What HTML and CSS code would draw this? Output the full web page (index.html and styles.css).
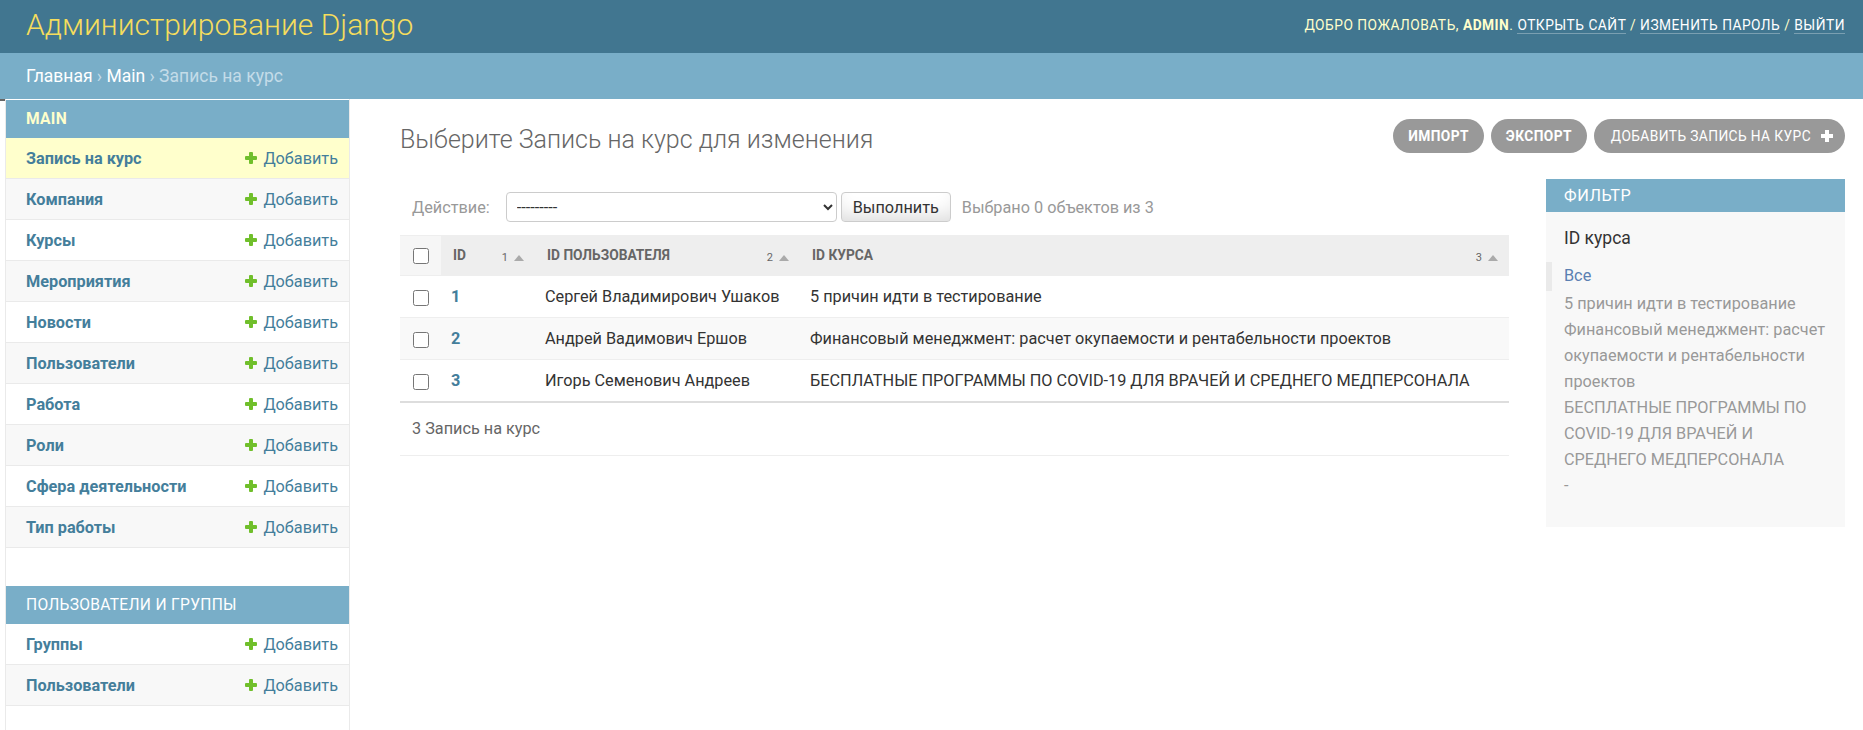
FILE: index.html
```html
<!DOCTYPE html>
<html lang="ru">
<head>
<meta charset="utf-8">
<title>Выберите Запись на курс для изменения | Администрирование Django</title>
<link rel="stylesheet" href="styles.css">
</head>
<body>
<div class="header">
  <div class="branding">Администрирование Django</div>
  <div class="user-tools">Добро пожаловать, <strong>admin</strong>. <a href="#">Открыть сайт</a> / <a href="#">Изменить пароль</a> / <a href="#">Выйти</a></div>
</div>
<div class="breadcrumbs"><a href="#">Главная</a>&nbsp;›&nbsp;<a href="#">Main</a>&nbsp;›&nbsp;Запись на курс</div>
<div class="main">
  <div class="toggle"><span class="toggle-mark"></span></div>
  <nav class="sidebar">
    <div class="module">
      <div class="caption current">Main</div>
      <div class="row selected"><a class="model" href="#">Запись на курс</a><a class="addlink" href="#"><span class="plus"></span>Добавить</a></div>
      <div class="row alt"><a class="model" href="#">Компания</a><a class="addlink" href="#"><span class="plus"></span>Добавить</a></div>
      <div class="row"><a class="model" href="#">Курсы</a><a class="addlink" href="#"><span class="plus"></span>Добавить</a></div>
      <div class="row alt"><a class="model" href="#">Мероприятия</a><a class="addlink" href="#"><span class="plus"></span>Добавить</a></div>
      <div class="row"><a class="model" href="#">Новости</a><a class="addlink" href="#"><span class="plus"></span>Добавить</a></div>
      <div class="row alt"><a class="model" href="#">Пользователи</a><a class="addlink" href="#"><span class="plus"></span>Добавить</a></div>
      <div class="row"><a class="model" href="#">Работа</a><a class="addlink" href="#"><span class="plus"></span>Добавить</a></div>
      <div class="row alt"><a class="model" href="#">Роли</a><a class="addlink" href="#"><span class="plus"></span>Добавить</a></div>
      <div class="row"><a class="model" href="#">Сфера деятельности</a><a class="addlink" href="#"><span class="plus"></span>Добавить</a></div>
      <div class="row alt"><a class="model" href="#">Тип работы</a><a class="addlink" href="#"><span class="plus"></span>Добавить</a></div>
    </div>
    <div class="module">
      <div class="caption">Пользователи и группы</div>
      <div class="row"><a class="model" href="#">Группы</a><a class="addlink" href="#"><span class="plus"></span>Добавить</a></div>
      <div class="row alt"><a class="model" href="#">Пользователи</a><a class="addlink" href="#"><span class="plus"></span>Добавить</a></div>
    </div>
  </nav>
  <div class="content">
    <div class="title-row">
      <h1>Выберите Запись на курс для изменения</h1>
      <ul class="object-tools">
        <li><a class="tool strong" href="#">Импорт</a></li>
        <li><a class="tool strong" href="#">Экспорт</a></li>
        <li><a class="tool add" href="#">Добавить Запись на курс<span class="tool-plus"></span></a></li>
      </ul>
    </div>
    <div class="changelist">
      <div class="form-container">
        <div class="actions">
          <label class="action-label">Действие:</label>
          <select class="action-select"><option>---------</option></select>
          <button class="button" type="button">Выполнить</button>
          <span class="action-counter">Выбрано 0 объектов из 3</span>
        </div>
        <table class="results">
          <colgroup><col class="c1"><col class="c2"><col class="c3"><col class="c4"></colgroup>
          <thead>
            <tr>
              <th class="cb-col"><input type="checkbox" class="cb"></th>
              <th class="sorted"><div class="sortoptions"><span class="prio">1</span><span class="arrow"></span></div><div class="text">ID</div></th>
              <th class="sorted"><div class="sortoptions"><span class="prio">2</span><span class="arrow"></span></div><div class="text">ID пользователя</div></th>
              <th class="sorted"><div class="sortoptions"><span class="prio">3</span><span class="arrow"></span></div><div class="text">ID курса</div></th>
            </tr>
          </thead>
          <tbody>
            <tr>
              <td class="cb-cell"><input type="checkbox" class="cb"></td>
              <td><a class="idlink" href="#">1</a></td>
              <td>Сергей Владимирович Ушаков</td>
              <td>5 причин идти в тестирование</td>
            </tr>
            <tr class="alt">
              <td class="cb-cell"><input type="checkbox" class="cb"></td>
              <td><a class="idlink" href="#">2</a></td>
              <td>Андрей Вадимович Ершов</td>
              <td>Финансовый менеджмент: расчет окупаемости и рентабельности проектов</td>
            </tr>
            <tr>
              <td class="cb-cell"><input type="checkbox" class="cb"></td>
              <td><a class="idlink" href="#">3</a></td>
              <td>Игорь Семенович Андреев</td>
              <td>БЕСПЛАТНЫЕ ПРОГРАММЫ ПО COVID-19 ДЛЯ ВРАЧЕЙ И СРЕДНЕГО МЕДПЕРСОНАЛА</td>
            </tr>
          </tbody>
        </table>
        <p class="paginator">3 Запись на курс</p>
      </div>
      <div class="filter">
        <h2 class="filter-title">Фильтр</h2>
        <h3 class="filter-h3">ID курса</h3>
        <ul class="filter-list">
          <li class="chosen"><a href="#">Все</a></li>
          <li><a href="#">5 причин идти в тестирование</a></li>
          <li><a href="#">Финансовый менеджмент: расчет<br>окупаемости и рентабельности<br>проектов</a></li>
          <li><a href="#">БЕСПЛАТНЫЕ ПРОГРАММЫ ПО<br>COVID-19 ДЛЯ ВРАЧЕЙ И<br>СРЕДНЕГО МЕДПЕРСОНАЛА</a></li>
          <li><a href="#">-</a></li>
        </ul>
      </div>
    </div>
  </div>
</div>
</body>
</html>
```

FILE: styles.css
```css
* { box-sizing: border-box; }

body {
  margin: 0;
  background: #fff;
  color: #333;
  font-family: Roboto, "Liberation Sans", sans-serif;
  font-size: 16.25px;
}

a { text-decoration: none; }

/* header */
.header {
  height: 53px;
  background: #417690;
  display: flex;
  align-items: center;
  justify-content: space-between;
  padding: 0 18px 4px 26px;
}
.branding {
  font-size: 30px;
  font-weight: 300;
  color: #f5dd5d;
  line-height: 1;
}
.user-tools {
  font-size: 13.75px;
  letter-spacing: 0.5px;
  text-transform: uppercase;
  color: #ffc;
  line-height: 18px;
}
.user-tools strong { font-weight: 700; }
.user-tools a {
  color: #fff;
  border-bottom: 1px solid rgba(255, 255, 255, 0.3);
}

/* breadcrumbs */
.breadcrumbs {
  height: 46px;
  background: #79aec8;
  padding: 0 26px;
  display: flex;
  align-items: center;
  font-size: 17.5px;
  color: #c4dce8;
}
.breadcrumbs a { color: #fff; }

/* main */
.main {
  display: flex;
  align-items: stretch;
  min-height: 631px;
}
.toggle {
  flex: 0 0 6px;
  border-right: 1px solid #eaeaea;
  position: relative;
}
.toggle-mark {
  position: absolute;
  left: 0;
  top: 0;
  width: 5px;
  height: 2px;
  background: #666;
}

/* sidebar */
.sidebar {
  flex: 0 0 344px;
  border-right: 1px solid #eaeaea;
  padding-top: 1px;
  font-size: 16.25px;
}
.module { margin-bottom: 38px; }
.caption {
  background: #79aec8;
  color: #fff;
  padding: 9px 20px;
  line-height: 20px;
  font-size: 15.6px;
  letter-spacing: 0.3px;
  text-transform: uppercase;
}
.caption.current {
  color: #ffc;
  font-weight: 700;
}
.row {
  display: flex;
  align-items: center;
  justify-content: space-between;
  height: 41px;
  padding: 0 11px 0 20px;
  border-bottom: 1px solid #eaeaea;
  background: #fff;
}
.row.alt { background: #f8f8f8; }
.row.selected { background: #ffc; }
.model {
  color: #447e9b;
  font-weight: 700;
}
.addlink {
  color: #447e9b;
  display: flex;
  align-items: center;
}
.plus {
  position: relative;
  width: 12px;
  height: 12px;
  margin-right: 6px;
}
.plus::before, .plus::after {
  content: "";
  position: absolute;
  background: #70bf2b;
  border-radius: 1px;
}
.plus::before { left: 4px; top: 0; width: 4px; height: 12px; }
.plus::after { left: 0; top: 4px; width: 12px; height: 4px; }

/* content */
.content {
  flex: 1 1 auto;
  min-width: 0;
  padding: 20px 18px 20px 50px;
}
.title-row {
  display: flex;
  justify-content: space-between;
  align-items: flex-start;
  margin-bottom: 22px;
}
h1 {
  margin: 4px 0 0;
  font-size: 25px;
  font-weight: 300;
  color: #666;
  line-height: 34px;
}
.object-tools {
  list-style: none;
  margin: 0;
  padding: 0;
  display: flex;
  gap: 7px;
}
.tool {
  display: flex;
  align-items: center;
  height: 34px;
  padding: 0 15px;
  border-radius: 17px;
  background: #999;
  color: #fff;
  font-size: 13.75px;
  letter-spacing: 0.4px;
  text-transform: uppercase;
}
.tool.strong { font-weight: 700; }
.tool.add { padding: 0 12px 0 17px; }
.tool-plus {
  position: relative;
  width: 12px;
  height: 12px;
  margin-left: 10px;
}
.tool-plus::before, .tool-plus::after {
  content: "";
  position: absolute;
  background: #fff;
}
.tool-plus::before { left: 4px; top: 0; width: 4px; height: 12px; }
.tool-plus::after { left: 0; top: 4px; width: 12px; height: 4px; }

/* changelist */
.changelist {
  display: flex;
  align-items: flex-start;
  gap: 37px;
}
.form-container {
  flex: 1 1 auto;
  min-width: 0;
}
.actions {
  display: flex;
  align-items: center;
  padding: 13px 12px;
  color: #999;
}
.action-label {
  font-size: 16.25px;
  color: #999;
  margin-right: 16px;
}
.action-select {
  width: 331px;
  height: 30px;
  border: 1px solid #ccc;
  border-radius: 4px;
  background: #fff;
  padding: 0 6px;
  font-family: Roboto, "Liberation Sans", sans-serif;
  font-size: 16.25px;
  color: #333;
}
.button {
  margin-left: 4px;
  width: 110px;
  height: 30px;
  border: 1px solid #ccc;
  border-radius: 4px;
  background: #fff;
  box-shadow: 0 -15px 20px -10px rgba(0, 0, 0, 0.15) inset;
  font-family: Roboto, "Liberation Sans", sans-serif;
  font-size: 16.25px;
  color: #333;
  padding: 0 8px;
}
.action-counter {
  margin-left: 11px;
  font-size: 16.25px;
  color: #999;
}

.results {
  width: 100%;
  border-collapse: collapse;
  table-layout: fixed;
}
.c1 { width: 41px; }
.c2 { width: 94px; }
.c3 { width: 265px; }
.results thead th {
  height: 40px;
  padding: 0;
  background: #eee;
  border-top: 1px solid #eee;
  border-bottom: 1px solid #eee;
  color: #666;
  font-size: 13.75px;
  font-weight: 700;
  text-transform: uppercase;
  text-align: left;
  vertical-align: middle;
  white-space: nowrap;
}
.results thead th.cb-col {
  background: #f6f6f6;
  text-align: center;
}
.results .text {
  padding: 0 12px;
  line-height: 18px;
}
.sortoptions {
  float: right;
  display: flex;
  align-items: center;
  padding: 5px 11px 0 0;
  line-height: 14px;
}
.prio {
  font-size: 11px;
  font-weight: 400;
  color: #666;
  margin-right: 6px;
}
.arrow {
  width: 0;
  height: 0;
  border-left: 5px solid transparent;
  border-right: 5px solid transparent;
  border-bottom: 6px solid #aaa;
}
.results td {
  height: 42px;
  padding: 0 10px;
  border-bottom: 1px solid #eee;
  vertical-align: middle;
  font-size: 16.25px;
  color: #333;
  white-space: nowrap;
}
.results tbody tr.alt td { background: #f9f9f9; }
.results tbody tr:last-child td { border-bottom: 1px solid #ddd; }
.results td.cb-cell { padding: 0; text-align: center; }
.cb {
  width: 16px;
  height: 16px;
  margin: 0;
  vertical-align: middle;
}
.idlink {
  color: #447e9b;
  font-weight: 700;
}
.paginator {
  margin: 0;
  padding: 13px 12px;
  line-height: 26px;
  border-top: 1px solid #ddd;
  border-bottom: 1px solid #eee;
  color: #666;
  font-size: 16.25px;
}

/* filter */
.filter {
  flex: 0 0 299px;
  background: #f8f8f8;
  padding-bottom: 28px;
}
.filter-title {
  margin: 0;
  background: #79aec8;
  color: #fff;
  padding: 6px 18px;
  line-height: 21px;
  font-size: 16.25px;
  font-weight: 400;
  letter-spacing: 0.6px;
  text-transform: uppercase;
}
.filter-h3 {
  margin: 14px 0 12px;
  padding: 0 18px;
  font-size: 17.5px;
  font-weight: 400;
  line-height: 24px;
  color: #333;
}
.filter-list {
  list-style: none;
  margin: 0;
  padding: 0 0 0 18px;
}
.filter-list li {
  line-height: 26px;
  font-size: 16.25px;
  white-space: nowrap;
}
.filter-list a { color: #999; }
.filter-list li.chosen {
  margin-left: -18px;
  padding: 1px 0 2px 12px;
  border-left: 6px solid #eaeaea;
}
.filter-list li.chosen a { color: #5b80b2; }
```
